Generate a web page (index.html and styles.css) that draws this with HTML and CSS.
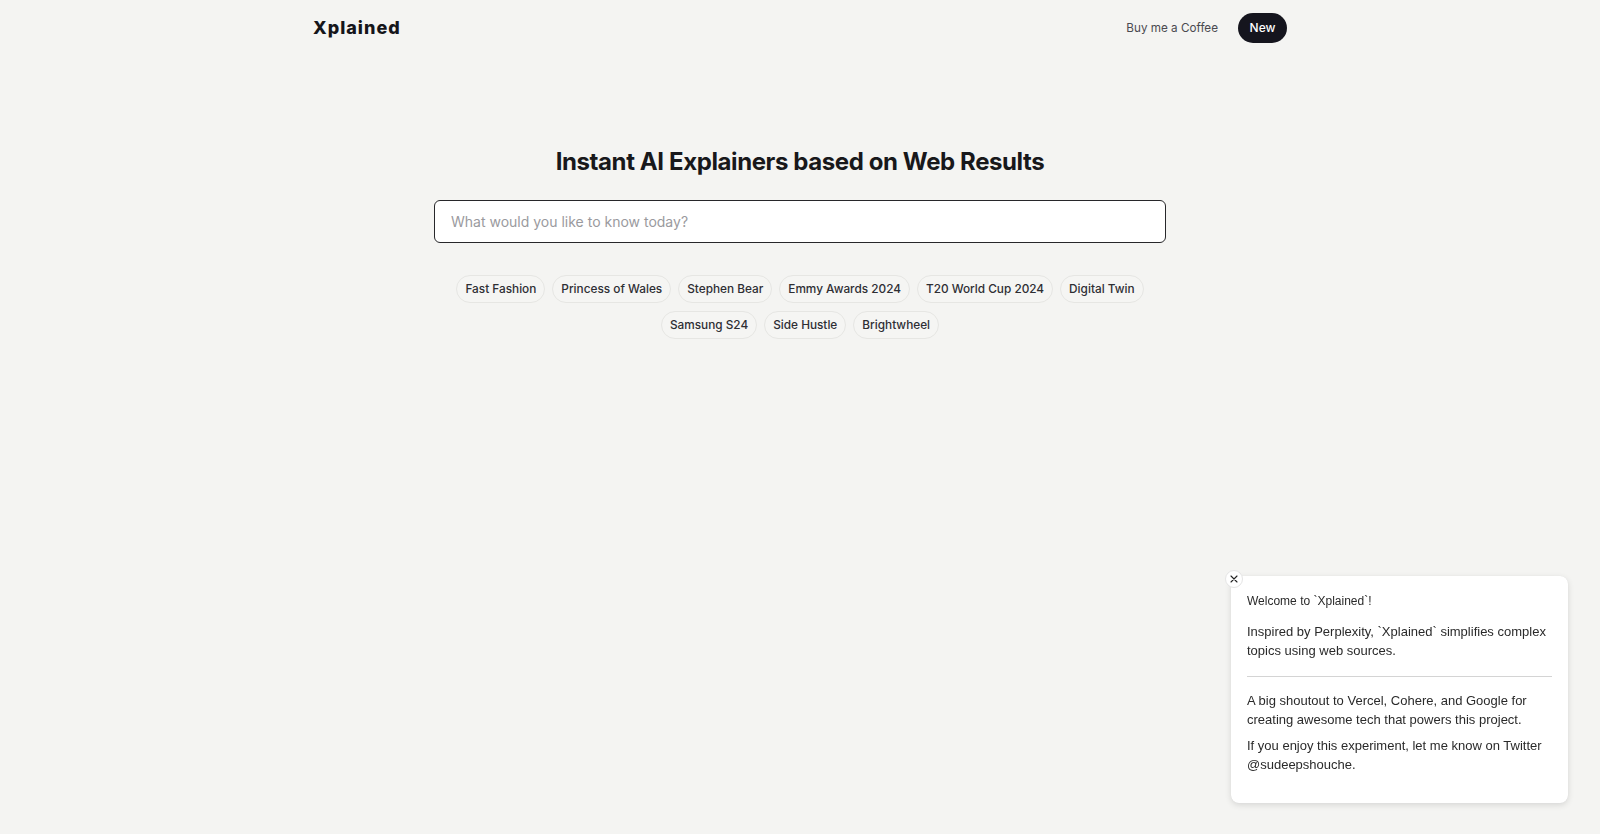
FILE: index.html
```html
<!DOCTYPE html>
<html lang="en">
<head>
<meta charset="utf-8">
<title>Xplained</title>
<link rel="stylesheet" href="styles.css">
</head>
<body>
<header class="header">
  <div class="logo">Xplained</div>
  <nav class="nav">
    <a class="nav-link" href="#">Buy me a Coffee</a>
    <a class="nav-new" href="#">New</a>
  </nav>
</header>
<main class="main">
  <h1 class="title">Instant AI Explainers based on Web Results</h1>
  <div class="search">
    <input class="search-input" type="text" placeholder="What would you like to know today?">
  </div>
  <div class="chips">
    <span class="chip">Fast Fashion</span>
    <span class="chip">Princess of Wales</span>
    <span class="chip">Stephen Bear</span>
    <span class="chip">Emmy Awards 2024</span>
    <span class="chip">T20 World Cup 2024</span>
    <span class="chip">Digital Twin</span>
    <span class="chip">Samsung S24</span>
    <span class="chip">Side Hustle</span>
    <span class="chip">Brightwheel</span>
  </div>
</main>
<aside class="popup">
  <button class="popup-close" aria-label="Close">
    <svg width="8" height="8" viewBox="0 0 8 8"><path d="M1 1L7 7M7 1L1 7" stroke="#222" stroke-width="1.1" stroke-linecap="round"/></svg>
  </button>
  <p class="popup-welcome">Welcome to `Xplained`!</p>
  <p class="popup-p">Inspired by Perplexity, `Xplained` simplifies complex topics using web sources.</p>
  <hr class="popup-hr">
  <p class="popup-p">A big shoutout to Vercel, Cohere, and Google for creating awesome tech that powers this project.</p>
  <p class="popup-p">If you enjoy this experiment, let me know on Twitter @sudeepshouche.</p>
</aside>
</body>
</html>
```

FILE: styles.css
```css
* { box-sizing: border-box; }
html, body { margin: 0; padding: 0; }
body {
  background: #f4f4f2;
  font-family: Inter, "Noto Sans", sans-serif;
  color: #18181b;
  min-height: 834px;
}
.header {
  max-width: 974px;
  margin: 0 auto;
  height: 55px;
  display: flex;
  align-items: center;
  justify-content: space-between;
}
.logo {
  font-size: 18px;
  font-weight: 800;
  letter-spacing: 1px;
  color: #15151a;
}
.nav { display: flex; align-items: center; gap: 20px; }
.nav-link {
  font-size: 11.7px;
  color: #4a4a50;
  text-decoration: none;
}
.nav-new {
  display: inline-flex;
  align-items: center;
  justify-content: center;
  height: 30px;
  width: 49px;
  border-radius: 15px;
  background: #15151e;
  color: #fff;
  font-size: 12px;
  font-weight: 500;
  text-decoration: none;
}
.main {
  display: flex;
  flex-direction: column;
  align-items: center;
  padding-top: 91px;
}
.title {
  margin: 0;
  font-size: 24px;
  line-height: 32px;
  font-weight: 700;
  letter-spacing: -0.4px;
  color: #18181b;
}
.search {
  margin-top: 22px;
  width: 732px;
}
.search-input {
  width: 100%;
  height: 43px;
  border: 1px solid #27272a;
  border-radius: 6px;
  background: #fff;
  padding: 0 16px;
  font-family: Inter, sans-serif;
  font-size: 14px;
  color: #18181b;
  outline: none;
}
.search-input::placeholder { color: #9a9a9e; }
.chips {
  margin-top: 32px;
  width: 732px;
  display: flex;
  flex-wrap: wrap;
  justify-content: center;
  gap: 8px 7px;
}
.chip {
  height: 28px;
  display: inline-flex;
  align-items: center;
  padding: 0 8px;
  border: 1px solid #e6e6e3;
  border-radius: 14px;
  background: #f5f5f3;
  font-size: 11.8px;
  font-weight: 500;
  color: #2e2e33;
}
.popup {
  position: fixed;
  right: 32px;
  bottom: 31px;
  width: 337px;
  background: #fff;
  border-radius: 8px;
  box-shadow: 0 2px 6px rgba(0,0,0,0.12), 0 0 1px rgba(0,0,0,0.1);
  padding: 16px 16px 22px 16px;
  font-family: "Liberation Sans", Arial, sans-serif;
  font-size: 13px;
  line-height: 19px;
  color: #2a2a2a;
}
.popup-close {
  position: absolute;
  left: -6px;
  top: -6px;
  width: 18px;
  height: 18px;
  border-radius: 50%;
  background: #fff;
  border: 1px solid #e4e4e4;
  display: flex;
  align-items: center;
  justify-content: center;
  padding: 0;
  cursor: pointer;
}
.popup-welcome { margin: 0 0 11px; font-size: 12px; }
.popup-p { margin: 0 0 7px; }
.popup-hr {
  border: 0;
  border-top: 1px solid #d4d4d4;
  margin: 16px 0 14px;
}
```
